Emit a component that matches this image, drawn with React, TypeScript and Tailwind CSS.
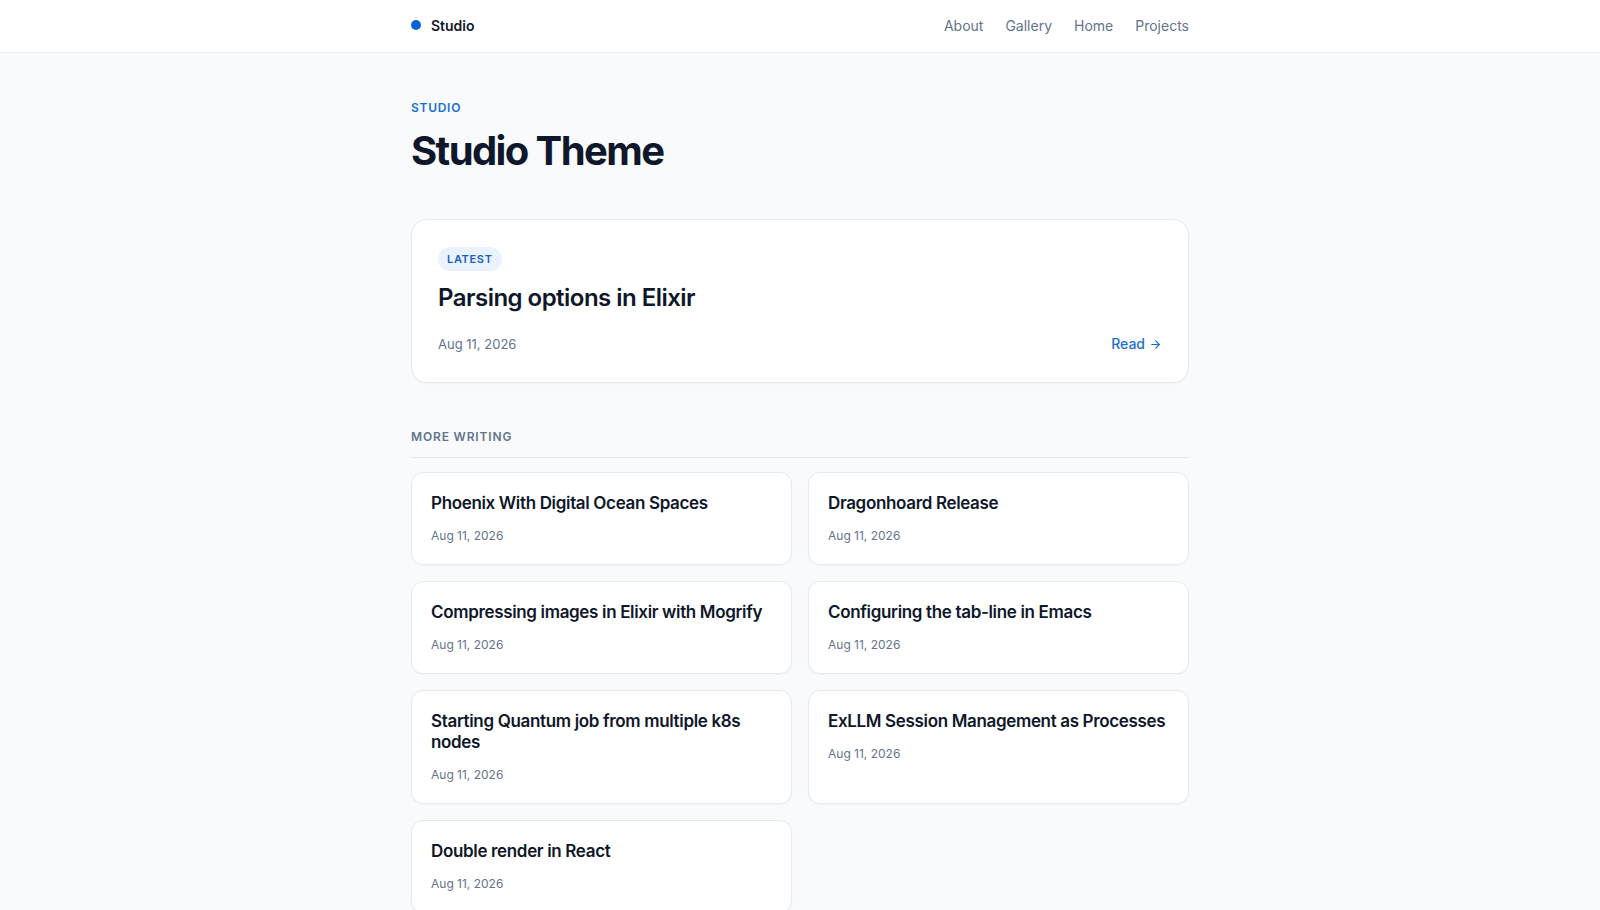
import { ArrowRight } from "lucide-react";

interface Post {
  title: string;
  date: string;
}

const posts: Post[] = [
  { title: "Phoenix With Digital Ocean Spaces", date: "Aug 11, 2026" },
  { title: "Dragonhoard Release", date: "Aug 11, 2026" },
  { title: "Compressing images in Elixir with Mogrify", date: "Aug 11, 2026" },
  { title: "Configuring the tab-line in Emacs", date: "Aug 11, 2026" },
  { title: "Starting Quantum job from multiple k8s nodes", date: "Aug 11, 2026" },
  { title: "ExLLM Session Management as Processes", date: "Aug 11, 2026" },
  { title: "Double render in React", date: "Aug 11, 2026" },
];

const navLinks = ["About", "Gallery", "Home", "Projects"];

export default function App() {
  return (
    <div className="min-h-screen bg-[#f8fafc] text-[#0f172a] font-['Inter',sans-serif] antialiased">
      <header className="h-[53px] bg-white border-b border-[#e9edf2]">
        <div className="mx-auto max-w-[778px] h-[50px] flex items-center justify-between">
          <a href="#" className="flex items-center gap-[10px]">
            <span className="w-[10px] h-[10px] rounded-full bg-[#0b63d6]" />
            <span className="text-[14px] font-semibold text-[#111827]">Studio</span>
          </a>
          <nav className="flex items-center gap-[22px]">
            {navLinks.map((link) => (
              <a key={link} href="#" className="text-[14px] text-[#64748b] hover:text-[#0f172a]">
                {link}
              </a>
            ))}
          </nav>
        </div>
      </header>

      <main className="mx-auto max-w-[778px] pt-[47px] pb-16">
        <p className="text-[12px] leading-4 font-semibold tracking-[0.06em] text-[#1a6fd1]">STUDIO</p>
        <h1 className="mt-[11px] text-[40px] leading-[1.2] font-bold tracking-[-0.04em] text-[#0f172a]">
          Studio Theme
        </h1>

        {/* Featured post */}
        <article className="mt-11 bg-white border border-[#e6eaf0] rounded-2xl px-[26px] pt-[25px] pb-7 shadow-[0_1px_2px_rgba(15,23,42,0.03)]">
          <span className="inline-flex items-center h-6 px-[9px] rounded-full bg-[#eaf2fd] text-[11px] font-semibold tracking-[0.06em] text-[#1a5fbf]">
            LATEST
          </span>
          <h2 className="mt-[11px] text-[24px] leading-8 font-semibold tracking-[-0.022em] text-[#0f172a]">
            Parsing options in Elixir
          </h2>
          <div className="mt-5 flex items-center justify-between">
            <span className="text-[13px] leading-5 text-[#64748b]">Aug 11, 2026</span>
            <a href="#" className="flex items-center gap-1 text-[14px] leading-5 font-medium text-[#1a6fd1]">
              Read <ArrowRight size={13} strokeWidth={2} />
            </a>
          </div>
        </article>

        {/* More writing */}
        <h3 className="mt-[46px] pb-3 border-b border-[#e4e8ee] text-[12px] leading-4 font-semibold tracking-[0.07em] text-[#64748b]">
          MORE WRITING
        </h3>

        <div className="mt-3.5 grid grid-cols-2 gap-4">
          {posts.map((post) => (
            <article
              key={post.title}
              className="bg-white border border-[#e6eaf0] rounded-xl px-[19px] pt-5 pb-[18px] shadow-[0_1px_2px_rgba(15,23,42,0.03)]"
            >
              <h4 className="text-[17px] leading-[21px] font-semibold tracking-[-0.02em] text-[#0f172a]">
                {post.title}
              </h4>
              <p className="mt-3 text-[12px] leading-5 text-[#64748b]">{post.date}</p>
            </article>
          ))}
        </div>
      </main>
    </div>
  );
}
